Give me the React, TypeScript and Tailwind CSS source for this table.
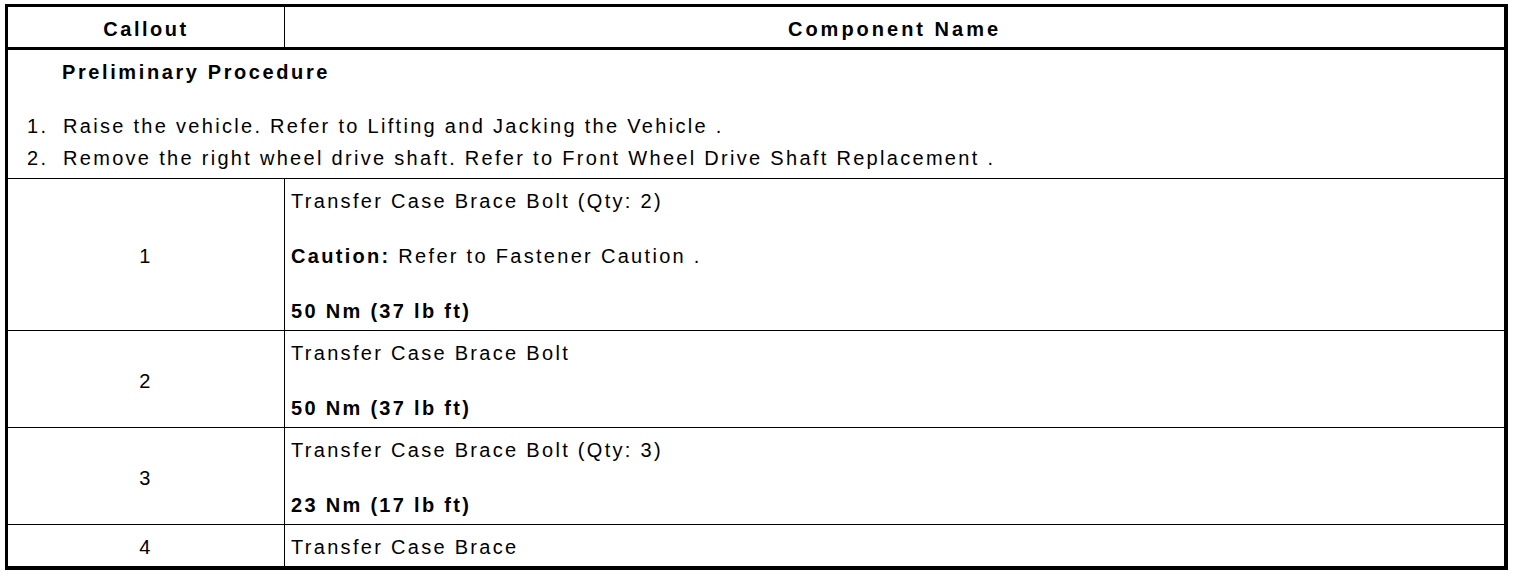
const rows = [
  {
    callout: "1",
    lines: [
      <>Transfer Case Brace Bolt (Qty: 2)</>,
      <>
        <b>Caution:</b> Refer to Fastener Caution .
      </>,
      <b>50 Nm (37 lb ft)</b>,
    ],
  },
  {
    callout: "2",
    lines: [<>Transfer Case Brace Bolt</>, <b>50 Nm (37 lb ft)</b>],
  },
  {
    callout: "3",
    lines: [<>Transfer Case Brace Bolt (Qty: 3)</>, <b>23 Nm (17 lb ft)</b>],
  },
  {
    callout: "4",
    lines: [<>Transfer Case Brace</>],
  },
];

export default function App() {
  return (
    <div
      className="min-h-[576px] bg-white pt-[4px] pl-[5px] text-black text-[20px] leading-[24px] tracking-[2.3px]"
      style={{ fontFamily: '"Liberation Sans", Arial, sans-serif' }}
    >
      <div className="w-[1503px] border-t-[3px] border-l-[3px] border-r-4 border-b-4 border-black">
        {/* header */}
        <div className="flex h-[43px] border-b-[3px] border-black font-bold">
          <div className="w-[277px] border-r border-black flex items-center justify-center pt-[3px] tracking-[2.5px]">
            Callout
          </div>
          <div className="flex-1 flex items-center justify-center pt-[3px] tracking-[3px]">
            Component Name
          </div>
        </div>

        {/* preliminary procedure */}
        <div className="border-b border-black pt-[10px] pb-[8px]">
          <p className="pl-[54px] font-bold tracking-[2.6px]">Preliminary Procedure</p>
          <ol className="mt-[30px] flex flex-col gap-[8px]">
            <li className="flex pl-[19px]">
              <span className="w-[36px]">1.</span>
              <span>Raise the vehicle. Refer to Lifting and Jacking the Vehicle .</span>
            </li>
            <li className="flex pl-[19px]">
              <span className="w-[36px]">2.</span>
              <span>
                Remove the right wheel drive shaft. Refer to Front Wheel Drive Shaft Replacement .
              </span>
            </li>
          </ol>
        </div>

        {rows.map((row, i) => (
          <div
            key={row.callout}
            className={`flex ${i < rows.length - 1 ? "border-b border-black" : ""}`}
          >
            <div className="w-[277px] border-r border-black flex items-center justify-center pt-[10px] pb-[7px]">
              {row.callout}
            </div>
            <div className="flex-1 pl-[6px] pt-[10px] pb-[7px] flex flex-col gap-[31px]">
              {row.lines.map((line, j) => (
                <p key={j}>{line}</p>
              ))}
            </div>
          </div>
        ))}
      </div>
    </div>
  );
}
